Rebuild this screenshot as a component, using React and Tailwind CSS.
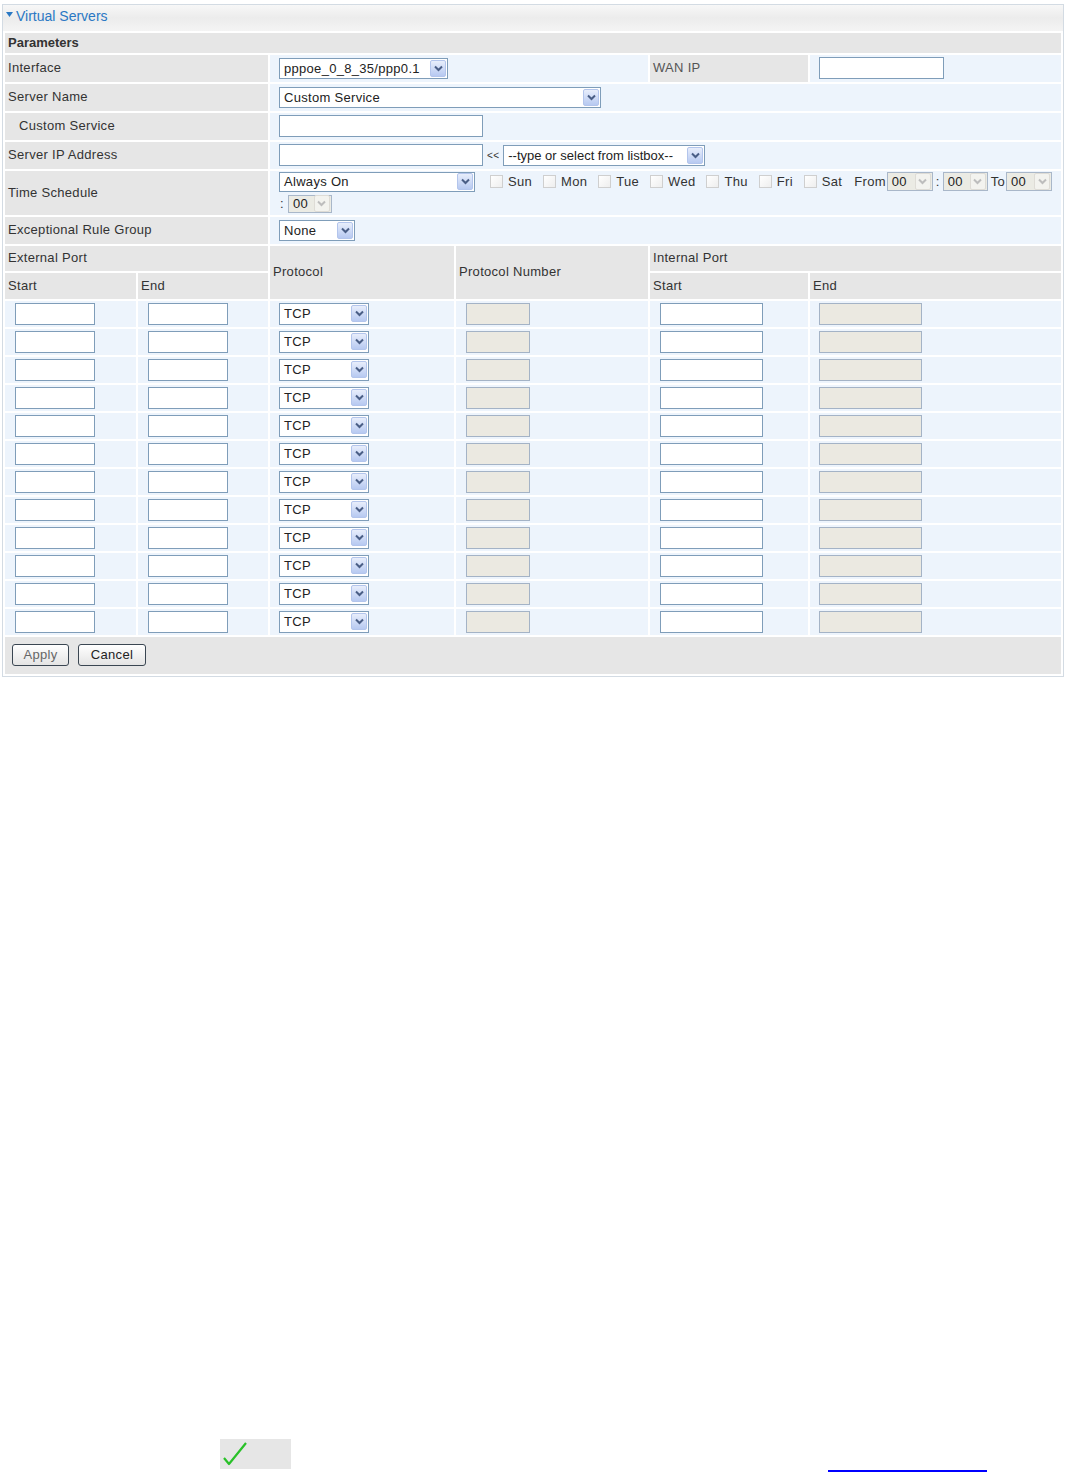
import React from "react";

function Arrow({ disabled }) {
  return (
    <span
      className={`mr-[1px] flex h-[17px] w-[16px] shrink-0 items-center justify-center rounded-[2px] border ${
        disabled
          ? "border-[#dedcd6] bg-[#f3f3ef]"
          : "border-[#b3c5ec] bg-gradient-to-b from-[#e8eefb] to-[#b7c9f1]"
      }`}
    >
      <svg width="9" height="7" viewBox="0 0 9 7">
        <path
          d="M1 1.5 L4.5 5 L8 1.5"
          fill="none"
          stroke={disabled ? "#bdbdbd" : "#4a5e86"}
          strokeWidth="2"
        />
      </svg>
    </span>
  );
}

function Select({ className, text, disabled }) {
  return (
    <div
      className={`flex items-center justify-between border ${
        disabled ? "border-[#a9b7c9] bg-[#ebebe4]" : "border-[#7f9db9] bg-white"
      } ${className}`}
    >
      <span className="whitespace-nowrap pl-[4px] text-[13px] leading-none text-[#222]">{text}</span>
      <Arrow disabled={disabled} />
    </div>
  );
}

function Input({ className, disabled }) {
  return (
    <div
      className={`h-[22px] border ${
        disabled ? "border-[#a4b3c6] bg-[#ebe9e1]" : "border-[#7f9db9] bg-white"
      } ${className}`}
    />
  );
}

function Day({ label }) {
  return (
    <span className="flex items-center gap-[5px]">
      <span className="h-[13px] w-[13px] border border-[#cfcfcf] bg-gradient-to-br from-[#ffffff] to-[#eeeeee]" />
      <span>{label}</span>
    </span>
  );
}

const gray = "bg-[#e6e6e6]";
const blue = "bg-[#edf4fc]";

export default function App() {
  const days = ["Sun", "Mon", "Tue", "Wed", "Thu", "Fri", "Sat"];
  return (
    <div className="min-h-[1472px] bg-white font-['Liberation_Sans',Arial,sans-serif] text-[13px] tracking-[0.3px] text-[#333]">
      <div className="h-[4px]" />
      <div className="ml-[2px] w-[1062px] border border-[#d3dbe3]">
        <div className="flex h-[26px] items-start bg-gradient-to-b from-[#f7f7f7] via-[#ececec] to-[#f4f4f4]">
          <div className="flex h-[23px] items-center pl-[3px] text-[14px] tracking-normal text-[#2a78c4]">
            <svg width="7" height="5" viewBox="0 0 7 5" className="mb-[5px] mr-[3px]">
              <path d="M0 0 L7 0 L3.5 5 Z" fill="#2a78c4" />
            </svg>
            <span>Virtual Servers</span>
          </div>
        </div>
        <table className="w-full table-fixed border-separate border-spacing-[2px]">
          <colgroup>
            <col className="w-[131px]" />
            <col className="w-[130px]" />
            <col className="w-[184px]" />
            <col className="w-[192px]" />
            <col className="w-[158px]" />
            <col className="w-[251px]" />
          </colgroup>
          <tbody>
            <tr>
              <td colSpan={6} className={`${gray} h-[19px] p-0 pl-[3px] font-bold tracking-normal`}>
                Parameters
              </td>
            </tr>
            <tr>
              <td colSpan={2} className={`${gray} h-[27px] p-0 pl-[3px]`}>Interface</td>
              <td colSpan={2} className={`${blue} p-0 pl-[9px]`}>
                <Select className="h-[21px] w-[169px]" text="pppoe_0_8_35/ppp0.1" />
              </td>
              <td className={`${gray} p-0 pl-[3px] text-[#555]`}>WAN IP</td>
              <td className={`${blue} p-0 pl-[9px]`}>
                <Input className="w-[125px]" />
              </td>
            </tr>
            <tr>
              <td colSpan={2} className={`${gray} h-[27px] p-0 pl-[3px]`}>Server Name</td>
              <td colSpan={4} className={`${blue} p-0 pl-[9px]`}>
                <Select className="h-[21px] w-[322px]" text="Custom Service" />
              </td>
            </tr>
            <tr>
              <td colSpan={2} className={`${gray} h-[27px] p-0 pl-[14px]`}>Custom Service</td>
              <td colSpan={4} className={`${blue} p-0 pl-[9px]`}>
                <Input className="w-[204px]" />
              </td>
            </tr>
            <tr>
              <td colSpan={2} className={`${gray} h-[27px] p-0 pl-[3px]`}>Server IP Address</td>
              <td colSpan={4} className={`${blue} p-0 pl-[9px]`}>
                <div className="flex items-center">
                  <Input className="w-[204px]" />
                  <span className="ml-[4px] mr-[4px] text-[10px]">&lt;&lt;</span>
                  <Select className="h-[21px] w-[202px] tracking-normal" text="--type or select from listbox--" />
                </div>
              </td>
            </tr>
            <tr>
              <td colSpan={2} className={`${gray} h-[44px] p-0 pl-[3px]`}>Time Schedule</td>
              <td colSpan={4} className={`${blue} p-0 pl-[9px]`}>
                <div className="flex flex-col gap-[2px]">
                  <div className="flex items-center whitespace-nowrap">
                    <Select className="h-[20px] w-[196px]" text="Always On" />
                    <div className="ml-[15px] flex items-center gap-[11px]">
                      {days.map((d) => (
                        <Day key={d} label={d} />
                      ))}
                    </div>
                    <span className="ml-[12px]">From</span>
                    <Select className="ml-[1px] h-[19px] w-[46px]" text="00" disabled />
                    <span className="mx-[3px]">:</span>
                    <Select className="h-[19px] w-[45px]" text="00" disabled />
                    <span className="ml-[3px]">To</span>
                    <Select className="ml-[1px] h-[19px] w-[46px]" text="00" disabled />
                  </div>
                  <div className="flex items-center">
                    <span className="ml-[1px] mr-[4px]">:</span>
                    <Select className="h-[18px] w-[44px]" text="00" disabled />
                  </div>
                </div>
              </td>
            </tr>
            <tr>
              <td colSpan={2} className={`${gray} h-[27px] p-0 pl-[3px]`}>Exceptional Rule Group</td>
              <td colSpan={4} className={`${blue} p-0 pl-[9px]`}>
                <Select className="h-[21px] w-[76px]" text="None" />
              </td>
            </tr>
            <tr>
              <td colSpan={2} className={`${gray} h-[25px] p-0 pl-[3px]`}>External Port</td>
              <td rowSpan={2} className={`${gray} p-0 pl-[3px]`}>Protocol</td>
              <td rowSpan={2} className={`${gray} p-0 pl-[3px]`}>Protocol Number</td>
              <td colSpan={2} className={`${gray} p-0 pl-[3px]`}>Internal Port</td>
            </tr>
            <tr>
              <td className={`${gray} h-[26px] p-0 pl-[3px]`}>Start</td>
              <td className={`${gray} p-0 pl-[3px]`}>End</td>
              <td className={`${gray} p-0 pl-[3px]`}>Start</td>
              <td className={`${gray} p-0 pl-[3px]`}>End</td>
            </tr>
            {Array.from({ length: 12 }).map((_, i) => (
              <tr key={i}>
                <td className={`${blue} h-[26px] p-0 pl-[10px]`}>
                  <Input className="w-[80px]" />
                </td>
                <td className={`${blue} p-0 pl-[10px]`}>
                  <Input className="w-[80px]" />
                </td>
                <td className={`${blue} p-0 pl-[9px]`}>
                  <Select className="h-[22px] w-[90px]" text="TCP" />
                </td>
                <td className={`${blue} p-0 pl-[10px]`}>
                  <Input className="w-[64px]" disabled />
                </td>
                <td className={`${blue} p-0 pl-[10px]`}>
                  <Input className="w-[103px]" />
                </td>
                <td className={`${blue} p-0 pl-[9px]`}>
                  <Input className="w-[103px]" disabled />
                </td>
              </tr>
            ))}
            <tr>
              <td colSpan={6} className={`${gray} h-[37px] p-0 pl-[7px]`}>
                <div className="flex items-center gap-[9px]">
                  <button className="h-[22px] w-[57px] rounded-[3px] border border-[#3a4652] bg-gradient-to-b from-[#ffffff] to-[#e4e4e4] text-[13px] text-[#666]">
                    Apply
                  </button>
                  <button className="h-[22px] w-[68px] rounded-[3px] border border-[#3a4652] bg-gradient-to-b from-[#ffffff] to-[#e4e4e4] text-[13px] text-[#222]">
                    Cancel
                  </button>
                </div>
              </td>
            </tr>
          </tbody>
        </table>
      </div>
      <div className="mt-[762px] flex items-start">
        <div className="ml-[220px] flex h-[30px] w-[71px] items-center bg-[#e6e6e6]">
          <svg width="28" height="28" viewBox="0 0 28 28" className="ml-[1px]">
            <path d="M3 18 L8 24 L25 3" fill="none" stroke="#29c129" strokeWidth="2.2" strokeLinejoin="round" />
          </svg>
        </div>
        <div className="ml-[537px] mt-[31px] h-[2px] w-[159px] bg-[#0000ff]" />
      </div>
    </div>
  );
}
